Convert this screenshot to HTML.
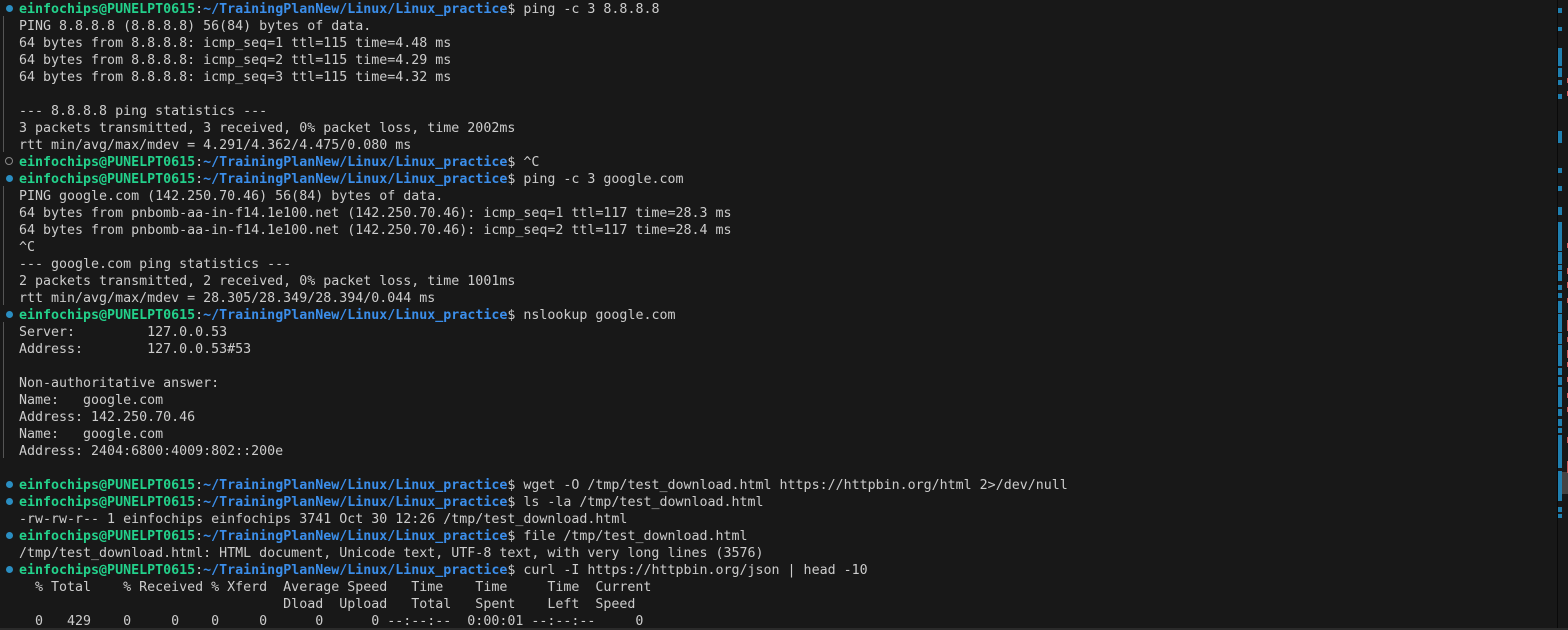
<!DOCTYPE html>
<html><head><meta charset="utf-8"><style>
html,body{margin:0;padding:0;background:#181818;width:1568px;height:630px;overflow:hidden}
#t{position:absolute;left:19px;top:1px;margin:0;font-family:"DejaVu Sans Mono","Liberation Mono",monospace;font-size:13.3px;line-height:17px;color:#cccccc;white-space:pre}
.u{color:#23d18b;font-weight:bold}.p{color:#3b8eea;font-weight:bold}
.d{position:absolute;left:6px;width:7px;height:7px;border-radius:50%;background:#2a8ec2}
.o{position:absolute;left:5px;width:6px;height:6px;border-radius:50%;border:1px solid #8a8a8a}
.g{position:absolute;left:3px;width:1px;background:#555}
.sb{position:absolute;left:1557px;width:1px;top:0;height:630px;background:#0a0a0a}
.m{position:absolute;left:1558px;width:4px;background:#1f7fb0}
.r{position:absolute;left:1567px;width:1px;background:#d05a5a}
</style></head><body>
<div class="g" style="top:16px;height:136px"></div>
<div class="g" style="top:186px;height:119px"></div>
<div class="g" style="top:322px;height:136px"></div>
<div class="d" style="top:5px"></div>
<div class="o" style="top:157px"></div>
<div class="d" style="top:175px"></div>
<div class="d" style="top:311px"></div>
<div class="d" style="top:481px"></div>
<div class="d" style="top:498px"></div>
<div class="d" style="top:532px"></div>
<div class="d" style="top:566px"></div>
<pre id="t"><span class="u">einfochips@PUNELPT0615</span>:<span class="p">~/TrainingPlanNew/Linux/Linux_practice</span>$ ping -c 3 8.8.8.8
PING 8.8.8.8 (8.8.8.8) 56(84) bytes of data.
64 bytes from 8.8.8.8: icmp_seq=1 ttl=115 time=4.48 ms
64 bytes from 8.8.8.8: icmp_seq=2 ttl=115 time=4.29 ms
64 bytes from 8.8.8.8: icmp_seq=3 ttl=115 time=4.32 ms

--- 8.8.8.8 ping statistics ---
3 packets transmitted, 3 received, 0% packet loss, time 2002ms
rtt min/avg/max/mdev = 4.291/4.362/4.475/0.080 ms
<span class="u">einfochips@PUNELPT0615</span>:<span class="p">~/TrainingPlanNew/Linux/Linux_practice</span>$ ^C
<span class="u">einfochips@PUNELPT0615</span>:<span class="p">~/TrainingPlanNew/Linux/Linux_practice</span>$ ping -c 3 google.com
PING google.com (142.250.70.46) 56(84) bytes of data.
64 bytes from pnbomb-aa-in-f14.1e100.net (142.250.70.46): icmp_seq=1 ttl=117 time=28.3 ms
64 bytes from pnbomb-aa-in-f14.1e100.net (142.250.70.46): icmp_seq=2 ttl=117 time=28.4 ms
^C
--- google.com ping statistics ---
2 packets transmitted, 2 received, 0% packet loss, time 1001ms
rtt min/avg/max/mdev = 28.305/28.349/28.394/0.044 ms
<span class="u">einfochips@PUNELPT0615</span>:<span class="p">~/TrainingPlanNew/Linux/Linux_practice</span>$ nslookup google.com
Server:         127.0.0.53
Address:        127.0.0.53#53

Non-authoritative answer:
Name:   google.com
Address: 142.250.70.46
Name:   google.com
Address: 2404:6800:4009:802::200e

<span class="u">einfochips@PUNELPT0615</span>:<span class="p">~/TrainingPlanNew/Linux/Linux_practice</span>$ wget -O /tmp/test_download.html https://httpbin.org/html 2&gt;/dev/null
<span class="u">einfochips@PUNELPT0615</span>:<span class="p">~/TrainingPlanNew/Linux/Linux_practice</span>$ ls -la /tmp/test_download.html
-rw-rw-r-- 1 einfochips einfochips 3741 Oct 30 12:26 /tmp/test_download.html
<span class="u">einfochips@PUNELPT0615</span>:<span class="p">~/TrainingPlanNew/Linux/Linux_practice</span>$ file /tmp/test_download.html
/tmp/test_download.html: HTML document, Unicode text, UTF-8 text, with very long lines (3576)
<span class="u">einfochips@PUNELPT0615</span>:<span class="p">~/TrainingPlanNew/Linux/Linux_practice</span>$ curl -I https://httpbin.org/json | head -10
  % Total    % Received % Xferd  Average Speed   Time    Time     Time  Current
                                 Dload  Upload   Total   Spent    Left  Speed
  0   429    0     0    0     0      0      0 --:--:--  0:00:01 --:--:--     0</pre>
<div class="sb"></div>
<div class="m" style="top:8px;height:5px"></div>
<div class="m" style="top:27px;height:4px"></div>
<div class="m" style="top:48px;height:18px"></div>
<div class="m" style="top:68px;height:9px"></div>
<div class="m" style="top:80px;height:5px"></div>
<div class="m" style="top:94px;height:5px"></div>
<div class="m" style="top:131px;height:12px"></div>
<div class="m" style="top:168px;height:5px"></div>
<div class="m" style="top:186px;height:5px"></div>
<div class="m" style="top:207px;height:8px"></div>
<div class="m" style="top:222px;height:29px"></div>
<div class="m" style="top:252px;height:12px"></div>
<div class="m" style="top:265px;height:5px"></div>
<div class="m" style="top:271px;height:10px"></div>
<div class="m" style="top:285px;height:5px"></div>
<div class="m" style="top:293px;height:5px"></div>
<div class="m" style="top:301px;height:12px"></div>
<div class="m" style="top:314px;height:18px"></div>
<div class="m" style="top:333px;height:11px"></div>
<div class="m" style="top:345px;height:21px"></div>
<div class="m" style="top:368px;height:7px"></div>
<div class="m" style="top:377px;height:8px"></div>
<div class="m" style="top:387px;height:20px"></div>
<div class="m" style="top:409px;height:7px"></div>
<div class="m" style="top:419px;height:7px"></div>
<div class="m" style="top:428px;height:5px"></div>
<div class="m" style="top:435px;height:16px"></div>
<div class="m" style="top:451px;height:17px"></div>
<div class="m" style="top:471px;height:25px"></div>
<div class="m" style="top:496px;height:5px"></div>
<div class="m" style="top:507px;height:5px"></div>
<div class="m" style="top:514px;height:4px"></div>
<div style="position:absolute;left:1562px;top:472px;width:6px;height:22px;background:#444"></div>
<div class="r" style="top:78px;height:5px"></div>
<div class="r" style="top:91px;height:5px"></div>
<div class="r" style="top:243px;height:5px"></div>
<div class="r" style="top:268px;height:6px"></div>
<div class="r" style="top:282px;height:6px"></div>
<div class="r" style="top:298px;height:5px"></div>
<div class="r" style="top:320px;height:11px"></div>
<div class="r" style="top:337px;height:5px"></div>
<div class="r" style="top:350px;height:8px"></div>
<div class="r" style="top:362px;height:5px"></div>
<div class="r" style="top:377px;height:5px"></div>
<div class="r" style="top:393px;height:5px"></div>
<div class="r" style="top:407px;height:5px"></div>
<div class="r" style="top:437px;height:6px"></div>
<div class="r" style="top:461px;height:12px"></div>
<div style="position:absolute;left:0;top:628px;width:1568px;height:2px;background:#2a2a2a"></div>
</body></html>
